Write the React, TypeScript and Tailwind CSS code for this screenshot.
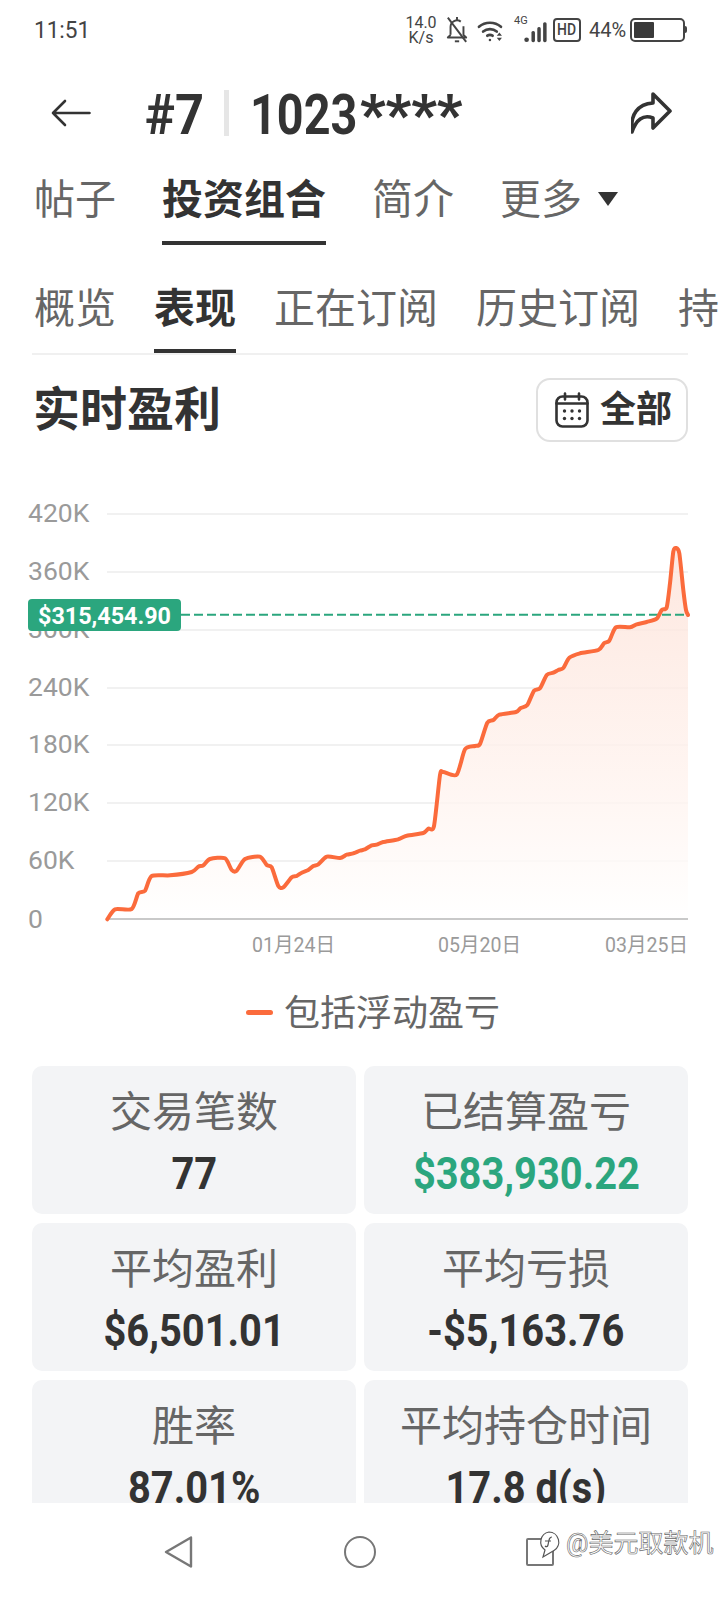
import React from "react";

const F = "font-['Roboto','Noto_Sans_CJK_SC',sans-serif]";

const raw: [number, number][] = [
  [322,1318],[345,1288],[395,1287],[415,1240],[435,1232],[455,1188],[510,1186],[575,1176],[595,1160],[610,1156],[630,1137],[675,1135],[695,1170],[710,1172],[735,1137],[780,1130],[800,1155],[815,1162],[835,1218],[850,1222],[875,1192],[890,1188],[905,1178],[925,1170],[940,1158],[955,1153],[980,1130],[1020,1134],[1040,1124],[1060,1120],
  [1080,1112],[1095,1108],[1115,1096],[1130,1094],[1150,1086],[1195,1078],[1220,1067],[1270,1059],[1285,1046],[1302,1038],[1320,885],[1330,876],[1370,884],[1395,808],[1425,798],[1440,792],[1462,728],[1480,720],[1498,704],[1548,696],[1562,684],[1582,675],[1602,632],[1620,625],[1640,585],[1660,578],[1675,570],[1690,564],[1708,533],[1740,520],[1795,510],[1812,490],[1828,482],[1848,442],[1890,442],[1910,433],[1940,426],[1970,416],[1985,390],[2000,382],[2010,310],[2020,215],[2028,204],[2038,220],[2050,330],[2058,390],[2064,405],
];
const pts = raw.map(([x, y]) => [x / 3, 480 + y / 3] as [number, number]);

function smooth(p: [number, number][]) {
  let d = `M${p[0][0].toFixed(1)} ${p[0][1].toFixed(1)}`;
  for (let i = 0; i < p.length - 1; i++) {
    const a = p[Math.max(i - 1, 0)], b = p[i], c = p[i + 1], e = p[Math.min(i + 2, p.length - 1)];
    const t = 0.12;
    d += `C${(b[0] + (c[0] - a[0]) * t).toFixed(1)} ${(b[1] + (c[1] - a[1]) * t).toFixed(1)} ${(c[0] - (e[0] - b[0]) * t).toFixed(1)} ${(c[1] - (e[1] - b[1]) * t).toFixed(1)} ${c[0].toFixed(1)} ${c[1].toFixed(1)}`;
  }
  return d;
}
const linePath = smooth(pts);
const areaPath = `${linePath}L688 919L107.3 919Z`;

const grid: [string, number][] = [["420K",514],["360K",572],["240K",688],["180K",745],["120K",803],["60K",861]];

function Chart() {
  return (
    <svg viewBox="0 442 720 548" className={`block w-[720px] h-[548px] ${F}`}>
      <defs>
        <linearGradient id="fillArea" x1="0" y1="550" x2="0" y2="919" gradientUnits="userSpaceOnUse">
          <stop offset="0" stopColor="#fde2d8" />
          <stop offset="0.7" stopColor="#fff5f1" />
          <stop offset="1" stopColor="#ffffff" />
        </linearGradient>
      </defs>
      {grid.map(([l, y]) => (
        <g key={l}>
          <line x1="107" x2="688" y1={y} y2={y} stroke="#f1f1f1" strokeWidth="2" />
          <text x="28" y={y + 8} fontSize="26.5" fill="#9a9a9a">{l}</text>
        </g>
      ))}
      <line x1="107" x2="688" y1="630" y2="630" stroke="#f1f1f1" strokeWidth="2" />
      <text x="28" y="928" fontSize="26.5" fill="#9a9a9a">0</text>
      <path d={areaPath} fill="url(#fillArea)" fillOpacity="0.8" />
      <line x1="107" x2="688" y1="919" y2="919" stroke="#c9c9c9" strokeWidth="2" />
      <line x1="181" x2="688" y1="614.7" y2="614.7" stroke="#2ba67e" strokeWidth="2" strokeDasharray="9 4" />
      <path d={linePath} fill="none" stroke="#fb6b3c" strokeWidth="4" strokeLinejoin="round" strokeLinecap="round" />
      <text x="28" y="638" fontSize="26.5" fill="#9a9a9a">300K</text>
      <rect x="28" y="599" width="153" height="32" rx="4" fill="#2ba67e" />
      <text x="38" y="624" fontSize="24" fontWeight="700" fill="#fff" textLength="133" lengthAdjust="spacingAndGlyphs">$315,454.90</text>
      <text x="252" y="952" fontSize="20.5" fill="#9a9a9a" textLength="83" lengthAdjust="spacingAndGlyphs">01月24日</text>
      <text x="438" y="952" fontSize="20.5" fill="#9a9a9a" textLength="83" lengthAdjust="spacingAndGlyphs">05月20日</text>
      <text x="605" y="952" fontSize="20.5" fill="#9a9a9a" textLength="83" lengthAdjust="spacingAndGlyphs">03月25日</text>
    </svg>
  );
}

function StatusBar() {
  return (
    <div className="flex h-[58px] items-center justify-between pl-[34px] pr-[35px] pt-[2px] text-[#444]">
      <span className="w-[56px] origin-left scale-x-[0.94] whitespace-nowrap text-[24px]">11:51</span>
      <div className="flex items-center">
        <div className="flex w-[30px] flex-col items-center text-[16px] leading-[15px]"><span>14.0</span><span>K/s</span></div>
        <svg viewBox="0 0 20 26" className="ml-[10px] h-[28px] w-[22px]" fill="none" stroke="#444" strokeWidth="1.8" strokeLinejoin="round">
          <path d="M10 1v2.5M4 17.5V10a6 6 0 0 1 9.5-4.8M16 9.5v8l2.5 2.5H1.5L4 17.5" />
          <path d="M1.5 1.5 18.5 24" />
          <path d="M8 23.5h4" />
        </svg>
        <svg viewBox="0 0 26 22" className="ml-[9px] h-[23px] w-[28px]" fill="none" stroke="#444" strokeWidth="2.6" strokeLinecap="round">
          <path d="M1.5 7.5a16 16 0 0 1 21 0" />
          <path d="M5.5 12a10 10 0 0 1 13 0" />
          <path d="M9.5 16a4.5 4.5 0 0 1 5 0" />
          <circle cx="12" cy="20" r="1.2" fill="#444" stroke="none" />
          <path d="m21 13 2.5 3h-5zM21 21l2.5-3h-5z" fill="#444" stroke="none" />
        </svg>
        <div className="relative ml-[8px] h-[26px] w-[34px]">
          <span className="absolute left-[1px] top-[-2px] text-[11px] leading-[12px]">4G</span>
          <svg viewBox="0 0 35 26" className="absolute inset-0 h-[26px] w-[34px]" fill="#444">
            <circle cx="14" cy="23" r="2.4" />
            <rect x="19" y="14" width="3.6" height="11.5" rx="1.6" />
            <rect x="25" y="10" width="3.6" height="15.5" rx="1.6" />
            <rect x="31" y="5" width="3.6" height="20.5" rx="1.6" />
          </svg>
        </div>
        <div className="ml-[6px] flex h-[24px] w-[28px] items-center justify-center rounded-[4px] border-2 border-[#444] text-[17px] font-medium"><span className="scale-x-[0.82]">HD</span></div>
        <span className="ml-[8px] w-[37px] whitespace-nowrap text-[20px]">44%</span>
        <div className="relative ml-[4px] flex h-[24px] w-[55px] items-center rounded-[5px] border-2 border-[#444] pl-[2px]">
          <div className="h-[16px] w-[20px] rounded-[1px] bg-[#3a3a3a]" />
          <div className="absolute right-[-4px] top-[6px] h-[7px] w-[2px] rounded-r bg-[#444]" />
        </div>
      </div>
    </div>
  );
}

function Header() {
  return (
    <div className="flex h-[110px] items-center text-[#333]">
      <svg viewBox="0 0 40 28" className="ml-[51px] h-[28px] w-[40px]" fill="none" stroke="#333" strokeWidth="2.6" strokeLinecap="round" strokeLinejoin="round">
        <path d="M38.5 14H2M14 2 2 14l12 12" />
      </svg>
      <div className="ml-[54px] w-[79px] pt-[3px]">
        <span className="inline-block origin-left scale-x-[0.92] whitespace-nowrap text-[55px] font-bold leading-[60px]">#7</span>
      </div>
      <div className="h-[46px] w-[5px] bg-[#e6e6e6]" />
      <div className="ml-[21px] flex w-[381px] items-start pt-[3px]">
        <span className="inline-block w-[110px] origin-left scale-x-[0.85] whitespace-nowrap text-[55px] font-bold leading-[60px]">1023</span>
        <span className="inline-block whitespace-nowrap text-[55px] font-black leading-[60px]">****</span>
      </div>
      <svg viewBox="11 6 42 42" className="h-[42px] w-[42px]" fill="none" stroke="#333" strokeWidth="3.6" strokeLinejoin="round" strokeLinecap="round">
        <path d="M33 8 50 25 33 42V32C23 28 16 34 12 46 10 28 18 18 33 17Z" />
      </svg>
    </div>
  );
}

function Tab({ t, active, pb }: { t: string; active?: boolean; pb: string }) {
  return (
    <div className={`border-b-4 ${pb} ${active ? "border-[#333] font-bold text-[#333]" : "border-transparent text-[#666]"}`}>
      {t}
    </div>
  );
}

function Card({ label, value, color }: { label: string; value: string; color?: string }) {
  return (
    <div className="flex h-[148px] flex-col items-center rounded-[10px] bg-[#f3f4f6] pt-[22px]">
      <div className="text-[42px] leading-[50px] text-[#666]">{label}</div>
      <div className={`mt-[6px] scale-x-[0.905] whitespace-nowrap text-[44px] font-bold leading-[60px] ${color ?? "text-[#333]"}`}>{value}</div>
    </div>
  );
}

export default function App() {
  return (
    <div className={`relative h-[1600px] w-[720px] overflow-hidden bg-white ${F}`}>
      <StatusBar />
      <Header />

      <div className="flex h-[77px] items-start pl-[34px] pt-[2px] text-[41px] leading-[60px]">
        <Tab t="帖子" pb="pb-[11px]" />
        <div className="ml-[46px]"><Tab t="投资组合" active pb="pb-[11px]" /></div>
        <div className="ml-[46px]"><Tab t="简介" pb="pb-[11px]" /></div>
        <div className="ml-[46px]"><Tab t="更多" pb="pb-[11px]" /></div>
        <svg viewBox="0 0 20 14" className="ml-[16px] mt-[22px] h-[14px] w-[20px]" fill="#333"><path d="M0 0h20L10 14z" /></svg>
      </div>

      <div className="flex h-[108px] w-[720px] gap-[38px] overflow-hidden whitespace-nowrap pl-[34px] pt-[34px] text-[41px] leading-[60px]">
        <div><Tab t="概览" pb="pb-[10px]" /></div>
        <div><Tab t="表现" active pb="pb-[10px]" /></div>
        <div><Tab t="正在订阅" pb="pb-[10px]" /></div>
        <div><Tab t="历史订阅" pb="pb-[10px]" /></div>
        <div><Tab t="持" pb="pb-[10px]" /></div>
      </div>
      <div className="mx-[32px] h-[2px] bg-[#f0f0f0]" />

      <div className="ml-[32px] mr-[32px] mt-[23px] flex h-[64px] items-center justify-between pl-[1px]">
        <div className="text-[47px] font-bold leading-[60px] text-[#333]">实时盈利</div>
        <div className="flex h-[64px] w-[152px] items-center rounded-[14px] border-2 border-[#e0e0e0] pl-[17px]">
          <svg viewBox="0 0 34 36" className="h-[36px] w-[34px]" fill="none" stroke="#333" strokeWidth="2.6" strokeLinecap="round">
            <rect x="1.5" y="4.5" width="31" height="30" rx="6" />
            <path d="M10 1.5v6M24 1.5v6M1.5 11.5h31" />
            <g fill="#333" stroke="none">
              <circle cx="9.5" cy="19" r="1.7" /><circle cx="17" cy="19" r="1.7" /><circle cx="24.5" cy="19" r="1.7" />
              <circle cx="9.5" cy="26.5" r="1.7" /><circle cx="17" cy="26.5" r="1.7" /><circle cx="24.5" cy="26.5" r="1.7" />
            </g>
          </svg>
          <span className="ml-[11px] text-[36px] font-bold leading-[44px] text-[#333]">全部</span>
        </div>
      </div>

      <Chart />

      <div className="flex h-[44px] items-center pl-[246px]">
        <div className="h-[5px] w-[27px] rounded-full bg-[#fb6b3c]" />
        <span className="ml-[11px] mt-[4px] text-[36px] leading-[44px] text-[#666]">包括浮动盈亏</span>
      </div>

      <div className="mx-[32px] mt-[32px] h-[437px] overflow-hidden">
        <div className="grid grid-cols-2 gap-x-[8px] gap-y-[9px]">
          <Card label="交易笔数" value="77" />
          <Card label="已结算盈亏" value="$383,930.22" color="text-[#2ba67e]" />
          <Card label="平均盈利" value="$6,501.01" />
          <Card label="平均亏损" value="-$5,163.76" />
          <Card label="胜率" value="87.01%" />
          <Card label="平均持仓时间" value="17.8 d(s)" />
        </div>
      </div>

      <div className="relative flex h-[97px] items-start pt-[33px]">
        <svg viewBox="0 0 30 32" className="ml-[164px] h-[32px] w-[30px]" fill="none" stroke="#777" strokeWidth="2.4" strokeLinejoin="round"><path d="M27 1.5 2 16l25 14.5z" /></svg>
        <div className="ml-[150px] h-[32px] w-[32px] rounded-full border-[2.5px] border-[#777]" />
        <div className="ml-[150px] mt-[2px] h-[28px] w-[28px] rounded-[2px] border-[2.5px] border-[#777]" />
        <div className="absolute left-[537px] top-[26px] flex items-center">
          <svg viewBox="0 0 24 30" className="h-[30px] w-[24px]" fill="#fff" stroke="#555" strokeWidth="1.2">
            <path d="M12 3a10 10 0 0 1 5 18.5L6 28l2-7A10 10 0 0 1 12 3Z" />
            <path d="M15 8c-3 0-3 3-4 8-.5 2-2 2-3 1M8 12h6" fill="none" />
          </svg>
          <span className="ml-[5px] whitespace-nowrap text-[25px] leading-[30px] text-white [-webkit-text-stroke:0.6px_#666]">@美元取款机</span>
        </div>
      </div>
    </div>
  );
}
